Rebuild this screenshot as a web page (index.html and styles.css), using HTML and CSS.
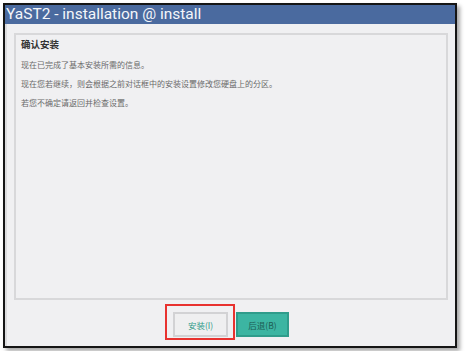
FILE: index.html
```html
<!DOCTYPE html>
<html lang="zh-CN">
<head>
    <meta charset="UTF-8">
    <title>YaST2 - installation @ install</title>
    <link rel="stylesheet" href="styles.css">
</head>
<body>

    <!-- YaST window -->
    <div class="window">
        <div class="titlebar">YaST2 - installation @ install</div>

        <div class="content">
            <div class="panel">
                <h1>确认安装</h1>
                <p>现在已完成了基本安装所需的信息。</p>
                <p>现在您若继续，则会根据之前对话框中的安装设置修改您硬盘上的分区。</p>
                <p>若您不确定请返回并检查设置。</p>
            </div>

            <div class="buttons">
                <span class="highlight">
                    <button class="btn">安装(<u>I</u>)</button>
                </span>
                <button class="btn btn-primary">后退(<u>B</u>)</button>
            </div>
        </div>
    </div>

</body>
</html>
```

FILE: styles.css
```css
/* Page */
body {
    margin: 0;
    padding: 3px;
    background-color: #ffffff;
    font-family: "Noto Sans", "Noto Sans CJK SC", sans-serif;
}

/* Window frame */
.window {
    width: 450px;
    height: 341px;
    border: 2px solid #151515;
    box-shadow: 3px 3px 4px rgba(0, 0, 0, 0.35);
    display: flex;
    flex-direction: column;
    background-color: #f0f0f2;
}

.titlebar {
    height: 19px;
    line-height: 19px;
    background-color: #4a6a9f;
    color: #f4f6fa;
    font-family: "Roboto", sans-serif;
    font-size: 15.5px;
    padding-left: 1px;
    white-space: nowrap;
}

/* Content */
.content {
    flex: 1;
    display: flex;
    flex-direction: column;
    padding: 9px 7px 6px 7px;
    border-left: 2px solid #dcdcde;
}

.panel {
    flex: 1;
    border: 2px solid #d8d8da;
    padding: 2px 5px;
}

.panel h1 {
    margin: 0 0 8px 0;
    font-family: "Noto Sans CJK SC", sans-serif;
    font-size: 9.5px;
    font-weight: bold;
    color: #333333;
    line-height: 14px;
}

.panel p {
    margin: 0 0 8px 0;
    font-family: "Noto Sans CJK SC", sans-serif;
    font-size: 8px;
    line-height: 11px;
    color: #6a6a6a;
}

/* Buttons */
.buttons {
    display: flex;
    justify-content: center;
    align-items: flex-end;
    gap: 1px;
    margin-top: 4px;
    padding-right: 8px;
}

.highlight {
    display: inline-flex;
    border: 2px solid #e8322f;
    padding: 6px 5px 1px 6px;
}

.btn {
    width: 55px;
    height: 25px;
    background-color: #efeff0;
    border: 2px solid #d2d2d4;
    color: #2f9a88;
    font-family: "Noto Sans CJK SC", sans-serif;
    font-size: 8.5px;
    padding: 0;
    cursor: pointer;
}

.btn u {
    text-decoration: none;
}

.btn-primary {
    width: 53px;
    margin-bottom: 3px;
    background-color: #3cb5a2;
    border-color: #2f9c8b;
    color: #1d5d54;
}
```
